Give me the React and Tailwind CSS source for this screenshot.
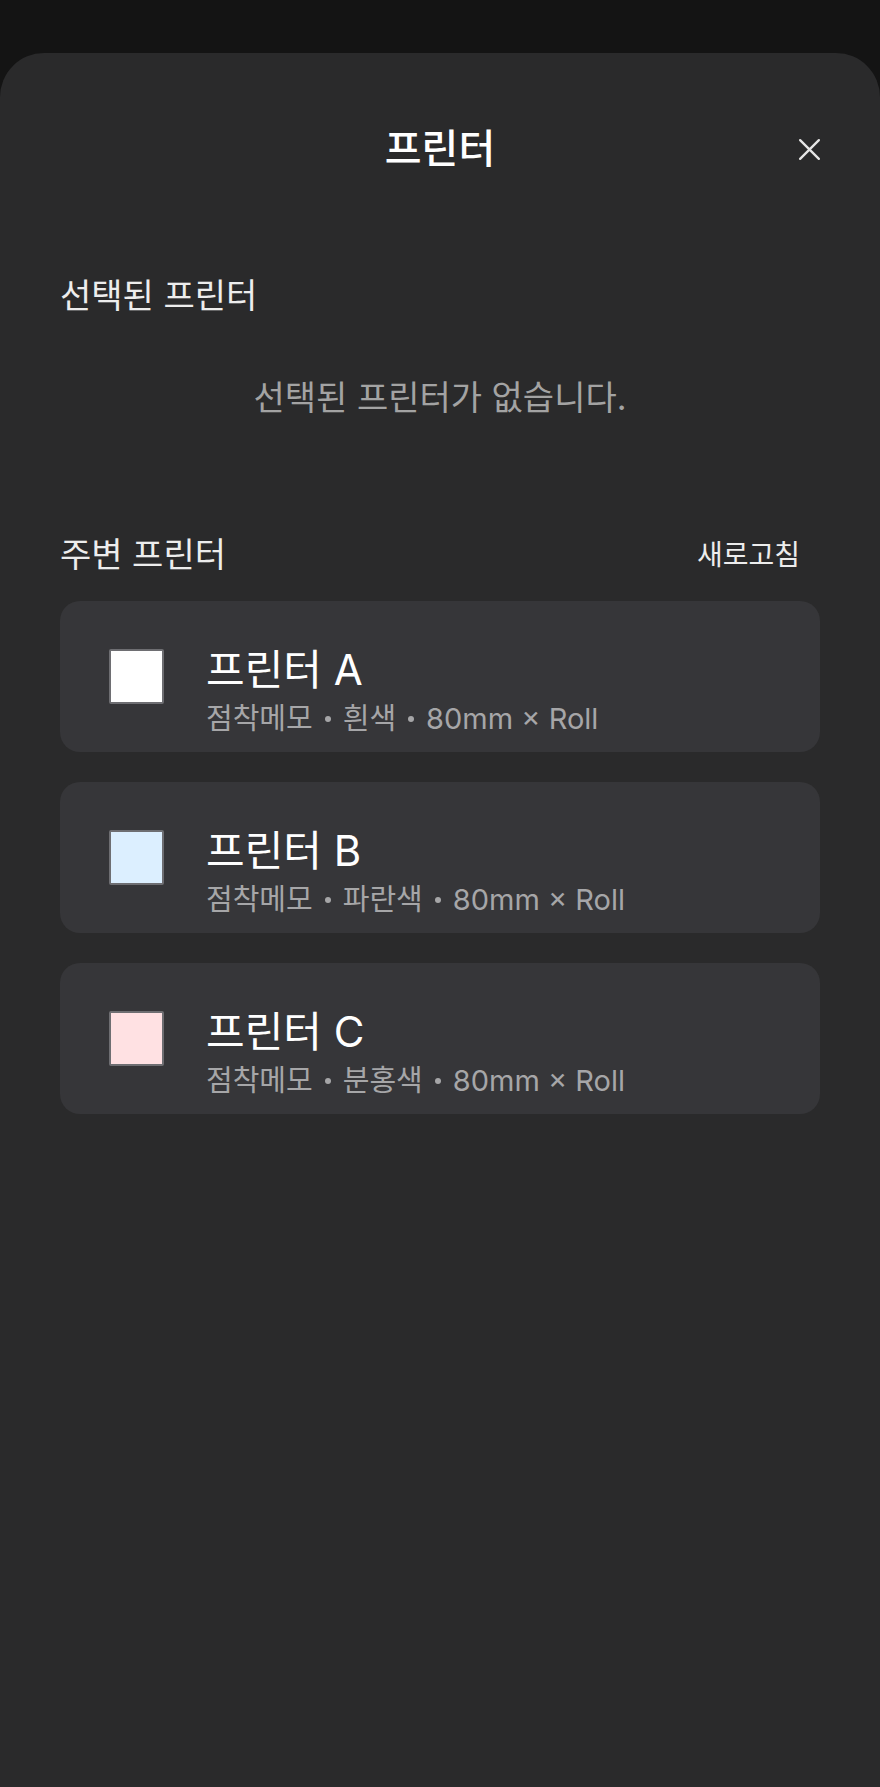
import React from 'react';

const printers = [
  { id: 'A', name: '프린터 A', parts: ['점착메모', '흰색', '80mm × Roll'], swatch: 'bg-[#ffffff]' },
  { id: 'B', name: '프린터 B', parts: ['점착메모', '파란색', '80mm × Roll'], swatch: 'bg-[#dcefff]' },
  { id: 'C', name: '프린터 C', parts: ['점착메모', '분홍색', '80mm × Roll'], swatch: 'bg-[#ffe1e3]' }
];

const App = () => {
  return (
    <div
      className="min-h-[1787px] bg-[#141414] flex flex-col"
      style={{ fontFamily: 'Inter, "Noto Sans CJK KR", sans-serif' }}
    >
      <div className="h-[53px]" />

      <div className="flex-1 bg-[#2a2a2b] rounded-t-[44px] px-[60px]">
        <div className="grid grid-cols-[1fr_auto_1fr] items-center pt-[74px]">
          <div />
          <h1 className="text-[40px] leading-[44px] font-medium text-white">프린터</h1>
          <div className="flex justify-end">
            <button className="w-[26px] h-[26px] flex items-center justify-center text-[#e6e6e6] -mr-[2px]">
              <svg width="25" height="25" viewBox="0 0 24 24" fill="none" stroke="currentColor" strokeWidth="2.2" strokeLinecap="round">
                <path d="M3 3L21 21M21 3L3 21" />
              </svg>
            </button>
          </div>
        </div>

        <h2 className="mt-[105px] text-[34px] leading-[40px] text-[#ededed]">선택된 프린터</h2>
        <p className="mt-[62px] text-center text-[34px] leading-[40px] text-[#a3a3a3]">
          선택된 프린터가 없습니다.
        </p>

        <div className="mt-[117px] flex items-center justify-between">
          <h2 className="text-[34px] leading-[40px] text-[#ededed]">주변 프린터</h2>
          <button className="text-[28px] leading-[40px] text-[#ededed] mr-[20px]">새로고침</button>
        </div>

        <div className="mt-[26px] flex flex-col gap-[30px]">
          {printers.map(p => (
            <div key={p.id} className="h-[151px] bg-[#363639] rounded-[20px] flex items-center px-[49px]">
              <div className={`w-[55px] h-[55px] rounded-[2px] border-2 border-[#6e6e72] ${p.swatch}`} />
              <div className="ml-[42px] mt-[30px]">
                <div className="text-[42px] leading-[46px] text-white">{p.name}</div>
                <div className="mt-[8px] text-[29px] leading-[36px] text-[#a6a6a8] flex items-center">
                  {p.parts.map((part, i) => (
                    <React.Fragment key={i}>
                      {i > 0 && <span className="mx-[12px] w-[6px] h-[6px] rounded-full bg-[#a6a6a8]" />}
                      <span>{part}</span>
                    </React.Fragment>
                  ))}
                </div>
              </div>
            </div>
          ))}
        </div>
      </div>
    </div>
  );
};

export default App;
